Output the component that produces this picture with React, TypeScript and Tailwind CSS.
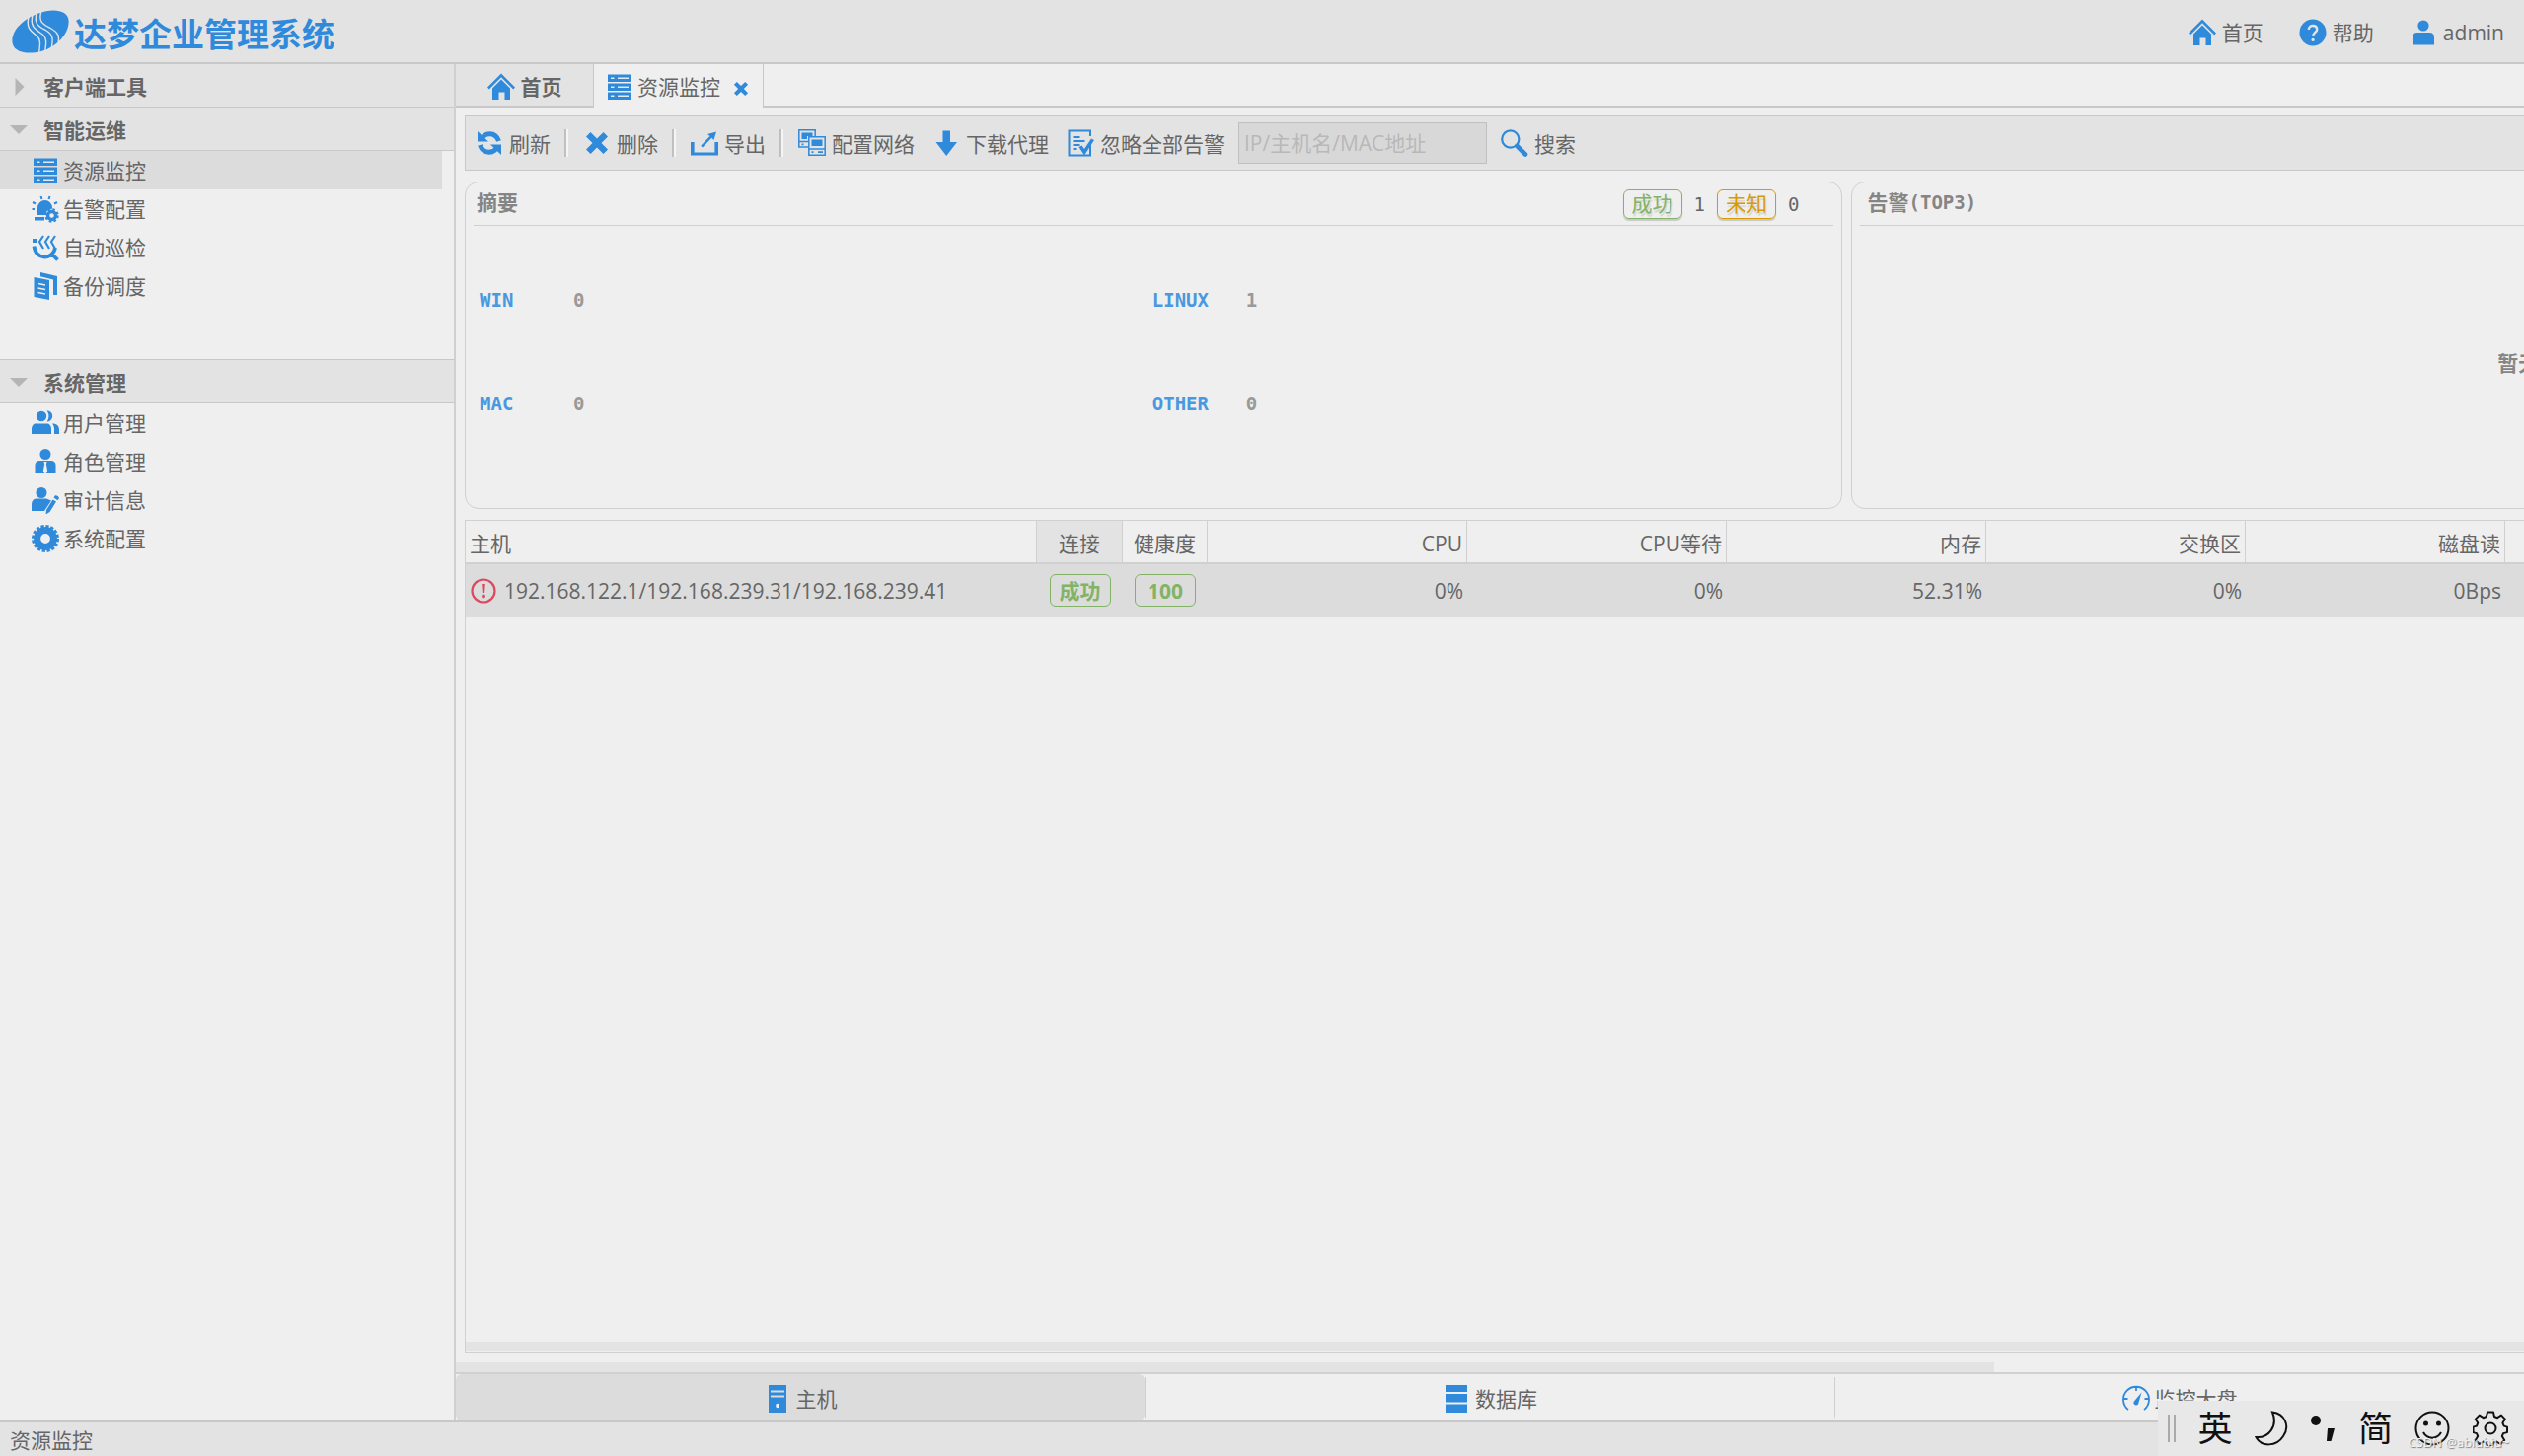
import type { ReactNode } from "react";

type IconProps = { size?: string };

const Svg = ({ size = "h-7 w-7", children }: IconProps & { children: ReactNode }) => (
  <svg
    viewBox="0 0 28 28"
    fill="currentColor"
    aria-hidden="true"
    className={`${size} shrink-0 text-[#308adb]`}
  >
    {children}
  </svg>
);

const HomeIcon = () => (
  <Svg>
    <path d="M14 .5 28 14.500 26.200 16.400 14 4.300 1.800 16.400 0 14.500Z" />
    <path d="M14 6.500 23 15.500V27H17.500V19.500H11.500V27H5V15.500Z" />
  </Svg>
);

const HelpIcon = () => (
  <Svg>
    <circle cx="14" cy="14" r="13.500" />
    <path
      d="M9.800 11c0-2.600 1.800-4 4.200-4s4.200 1.400 4.200 3.700c0 3.300-4 3.200-4 6.800"
      fill="none"
      stroke="#e3e3e3"
      strokeWidth="2.400"
    />
    <circle cx="14.100" cy="21.400" r="1.600" fill="#e3e3e3" />
  </Svg>
);

const UserIcon = () => (
  <Svg>
    <circle cx="14" cy="7" r="5.600" />
    <path d="M3 26.500V18.500c0-3 2-4.500 4.500-4.500h13c2.500 0 4.500 1.500 4.500 4.500v8Z" />
  </Svg>
);

const RackIcon = () => (
  <Svg>
    {[1.5, 10.5, 19.5].map((y) => (
      <g key={y}>
        <rect x="2" y={y} width="24" height="7.500" />
        <path d={`M5 ${y + 3.7}h3.500M12 ${y + 3.7}h11`} stroke="#dfe9f2" strokeWidth="1.600" />
      </g>
    ))}
  </Svg>
);

const AlarmIcon = () => (
  <Svg>
    <path d="M9.500 1 10.500 4M18.500 1l-1 3M1 7l3 1.500M26 7l-3 1.500M.5 14H3" stroke="currentColor" strokeWidth="2" />
    <path d="M6 20v-7.500a7.500 7.500 0 0 1 15 0v1l-5 2L13.500 20Z" />
    <path d="M3 22h10v3.500H3Z" />
    <circle cx="20.500" cy="20.500" r="4" fill="none" stroke="currentColor" strokeWidth="3.400" />
    <circle cx="20.500" cy="20.500" r="6.200" fill="none" stroke="currentColor" strokeWidth="2" strokeDasharray="2.600 2.270" />
  </Svg>
);

const PatrolIcon = () => (
  <Svg>
    <rect x="1" y="5" width="4" height="4" />
    <path
      d="M12 2 8 8l4 7M18 2l-4 6 4 7M24 2l-4 6 4 7"
      fill="none"
      stroke="currentColor"
      strokeWidth="2.200"
    />
    <path d="M2.500 12.500C4 27 21.500 27 24 14M20.500 20.500l6 6" fill="none" stroke="currentColor" strokeWidth="3.800" />
  </Svg>
);

const BackupIcon = () => (
  <Svg>
    <path d="M9 0 26 4V23H22V7.500L9 4.200Z" />
    <path d="M2.500 5 18 8V28L2.500 25Z" />
    <path d="M7 11.500 14 13M6.500 16l7.500 1.500M6.500 20.500 14 22" stroke="#efefef" strokeWidth="1.600" />
  </Svg>
);

const UsersIcon = () => (
  <Svg>
    <circle cx="10" cy="7" r="5.200" />
    <path d="M0 25v-5c0-3.500 2-5.500 4.500-5.500h11c2.500 0 4.500 2 4.500 5.500v5Z" />
    <path d="M15.500 1.200a5.700 5.700 0 0 1 0 11.400c2.600-3.400 2.600-7.800 0-11.400ZM21 14.500c5 0 7 2.500 7 6.500v4h-5v-5c0-2.300-.6-4-2-5.500Z" />
  </Svg>
);

const RoleIcon = () => (
  <Svg>
    <circle cx="14" cy="6.500" r="5.500" />
    <path d="M3.500 26V17.500c0-3 2-4.500 4.500-4.500h12c2.500 0 4.500 1.500 4.500 4.500V26Z" />
    <path d="M12.500 14h3l-.6 2.500 1.300 7-2.200 2-2.200-2 1.300-7Z" fill="#efefef" />
  </Svg>
);

const AuditIcon = () => (
  <Svg>
    <circle cx="10" cy="6.500" r="5.500" />
    <path d="M0 25v-7c0-3 2-5.500 5-5.500h10l5 2-7 10.500Z" />
    <path d="m15 24 6.500-10.500 3.500 2L18.500 26l-4 2.500ZM22.500 11.500l1.200-2c1.200-1 4.800 1 4.100 2.800l-1.300 2Z" />
  </Svg>
);

const GearIcon = () => (
  <Svg>
    <circle cx="14" cy="14" r="8.400" fill="none" stroke="currentColor" strokeWidth="7" />
    <circle cx="14" cy="14" r="12.500" fill="none" stroke="currentColor" strokeWidth="3" strokeDasharray="3.200 1.709" />
  </Svg>
);

const RefreshIcon = () => (
  <Svg>
    <path d="M5.500 11.500C8 3 20 2 23.500 12M22.500 16.500C20 25 8 26 4.500 16" fill="none" stroke="currentColor" strokeWidth="5" />
    <path d="M2 2v10.500H13ZM26 26V15.500H15Z" />
  </Svg>
);

const CrossIcon = ({ size }: IconProps) => (
  <Svg size={size}>
    <path d="M7.500 3 14 9.500 20.500 3 25 7.500 18.500 14 25 20.500 20.500 25 14 18.500 7.500 25 3 20.500 9.500 14 3 7.500Z" />
  </Svg>
);

const ExportIcon = () => (
  <Svg>
    <path d="M0 13h3.600v10.500h20.800V13H28v13.500H0Z" />
    <path d="M26 2.500 23.500 11 21.300 8.800 12 18.500 10.200 16.700 19.500 7 17 5Z" />
  </Svg>
);

const NetworkIcon = () => (
  <Svg>
    <g fill="none" stroke="currentColor" strokeWidth="1.500">
      <path d="M10 18H.8V.8h16.400V7M.8 12.500H10" />
      <path d="M10.800 7.800h16.400v18.400H10.800ZM10.800 20h16.400" />
    </g>
    <path d="M3.500 3.500h11V7H9v3H3.500ZM13.500 10.500h11v6.500h-11ZM3.500 14.500h2v1.800h-2ZM13.500 22.200h2V24h-2ZM20 22.200h5V24h-5Z" />
  </Svg>
);

const DownIcon = () => (
  <Svg>
    <path d="M10.500 1.500h7.500V13H25L14.200 27 3.500 13h7Z" />
  </Svg>
);

const IgnoreIcon = () => (
  <Svg>
    <path d="M24 14V26.500H2.500V1.500H24V7" fill="none" stroke="currentColor" strokeWidth="2" />
    <path d="M6.500 8h7M6.500 12h12M6.500 16h7M6.500 20h4" stroke="currentColor" strokeWidth="2" />
    <path d="m12.500 18 3-1.500 2.500 3.500L25 9.500l3 1.500-10 15.500Z" />
  </Svg>
);

const SearchIcon = () => (
  <Svg>
    <circle cx="9.800" cy="10" r="8.600" fill="none" stroke="currentColor" strokeWidth="2.200" />
    <path d="m16.500 17 8.500 8.500" stroke="currentColor" strokeWidth="4.600" strokeLinecap="round" />
  </Svg>
);

const HostIcon = () => (
  <Svg>
    <path d="M5 0h18v28H5Z" />
    <path d="M7 6.500h14M7 11.500h14" stroke="#dcdcdc" strokeWidth="2" />
    <ellipse cx="14" cy="21" rx="1.800" ry="2.300" fill="#efefef" />
  </Svg>
);

const DatabaseIcon = () => (
  <Svg>
    <path d="M3 0h22v7H3ZM3 9h22v8.500H3ZM3 19.500h22V28H3Z" />
  </Svg>
);

const GaugeIcon = () => (
  <Svg>
    <path
      d="M6 25A13 13 0 1 1 22 25M14 1v5M1 14h4.500M22.500 14H27"
      fill="none"
      stroke="currentColor"
      strokeWidth="1.800"
    />
    <path d="M19.500 7.500 16 19.500c-1.600 2-5.500.5-4.500-2.500Z" />
  </Svg>
);

const Logo = () => (
  <svg viewBox="0 0 58 44" className="h-11 w-[58px] shrink-0" aria-hidden="true">
    <path
      d="M27 3.500C41-2 57-.5 57.600 11 58 24 46 37 30 42 14 46 0 42.500.4 31 .8 19 13 8.500 27 3.500Z"
      fill="#308adb"
    />
    <g fill="none" stroke="#e3e3e3" strokeWidth="1.400">
      <path d="M17 7C14 19 20 22 25 26S28.500 36 27.500 45" />
      <path d="M21 5C18 17 24 20 30 24S35 34 33.500 43" />
      <path d="M25 3C22 15 28 17 35 21S42 30 40 40" />
      <path d="M30 1C26 13 33 15 40 19S49 27 46.500 36" />
    </g>
  </svg>
);

const opsItems = [
  { label: "资源监控", icon: <RackIcon />, active: true },
  { label: "告警配置", icon: <AlarmIcon /> },
  { label: "自动巡检", icon: <PatrolIcon /> },
  { label: "备份调度", icon: <BackupIcon /> },
];

const systemItems = [
  { label: "用户管理", icon: <UsersIcon /> },
  { label: "角色管理", icon: <RoleIcon /> },
  { label: "审计信息", icon: <AuditIcon /> },
  { label: "系统配置", icon: <GearIcon /> },
];

const summary = [
  { label: "WIN", value: 0 },
  { label: "LINUX", value: 1 },
  { label: "MAC", value: 0 },
  { label: "OTHER", value: 0 },
];

const metrics = [
  { label: "CPU", value: "0%" },
  { label: "CPU等待", value: "0%" },
  { label: "内存", value: "52.31%" },
  { label: "交换区", value: "0%" },
  { label: "磁盘读", value: "0Bps" },
];

export default function App() {
  return (
    <div className="flex h-screen flex-col overflow-hidden bg-[#efefef] font-['Open_Sans','Noto_Sans_CJK_SC',sans-serif] text-[21px] leading-7 text-[#666]">
      <Header />
      <div className="flex min-h-0 flex-1">
        <SideBar />
        <main className="flex min-w-0 flex-1 flex-col border-l-2 border-[#d0d0d0]">
          <PageTabs />
          <div className="min-h-0 flex-1 overflow-hidden">
            <div className="flex h-full min-w-[2818px] flex-col px-[9px] pt-2 pb-[9px]">
              <ToolBar />
              <div className="mt-[11px] flex h-[332px] gap-[9px]">
                <SummaryPanel />
                <AlarmPanel />
              </div>
              <HostTable />
            </div>
          </div>
          {/* Horizontal scroll bar */}
          <div className="h-[10px] shrink-0">
            <div className="h-full w-[74.4%] bg-[#e3e3e3]" />
          </div>
          <ViewTabs />
        </main>
      </div>
      <footer className="h-9 shrink-0 border-t-2 border-[#c8c8c8] bg-[#e3e3e3] px-[10px] pt-1">资源监控</footer>
      <InputMethodBar />
    </div>
  );
}

const Header = () => (
  <header className="flex h-[65px] shrink-0 items-center justify-between border-b-2 border-[#c8c8c8] bg-[#e3e3e3] pr-5 pl-3">
    <div className="flex items-center gap-[5px]">
      <Logo />
      <h1 className="pt-[6px] text-[33px] leading-10 font-bold text-[#308adb]">达梦企业管理系统</h1>
    </div>
    <nav className="flex gap-9 pt-[2px]">
      <a href="#" className="flex items-center gap-[6px]">
        <HomeIcon />
        首页
      </a>
      <a href="#" className="flex items-center gap-[6px]">
        <HelpIcon />
        帮助
      </a>
      <a href="#" className="flex items-center gap-[6px]">
        <UserIcon />
        admin
      </a>
    </nav>
  </header>
);

const SectionTitle = ({ label, open = false }: { label: string; open?: boolean }) => (
  <button
    type="button"
    aria-expanded={open}
    className="flex h-11 w-full items-center gap-4 border-b border-[#c8c8c8] bg-[#e3e3e3] pt-[3px] pl-[10px] font-bold"
  >
    <svg viewBox="0 0 18 18" className="h-[18px] w-[18px] fill-[#b5b5b5]" aria-hidden="true">
      {open ? <path d="M0 4h18L9 13Z" /> : <path d="M5.500 0v18l9-9Z" />}
    </svg>
    {label}
  </button>
);

const SideList = ({ items }: { items: { label: string; icon: ReactNode; active?: boolean }[] }) => (
  <ul className="mr-3">
    {items.map((item) => (
      <li key={item.label}>
        <a
          href="#"
          className={`flex h-[39px] items-center gap-1 pl-8 ${item.active ? "bg-[#dcdcdc]" : ""}`}
        >
          {item.icon}
          {item.label}
        </a>
      </li>
    ))}
  </ul>
);

const SideBar = () => (
  <aside className="w-[460px] shrink-0">
    <SectionTitle label="客户端工具" />
    <SectionTitle label="智能运维" open />
    <SideList items={opsItems} />
    <div className="mt-[55px] border-t border-[#c8c8c8]">
      <SectionTitle label="系统管理" open />
      <SideList items={systemItems} />
    </div>
  </aside>
);

const PageTabs = () => (
  <div className="flex h-11 shrink-0">
    <button
      type="button"
      className="flex w-[140px] items-center justify-center gap-[6px] border-r border-b-2 border-[#c8c8c8] bg-[#e3e3e3] pt-1 font-bold"
    >
      <HomeIcon />
      首页
    </button>
    <div className="flex items-center border-r border-[#c8c8c8] pt-[2px] pr-[13px] pl-3">
      <button type="button" className="flex items-center gap-1">
        <RackIcon />
        资源监控
      </button>
      <button type="button" aria-label="关闭" className="ml-3 pt-1">
        <CrossIcon size="h-[18px] w-[18px]" />
      </button>
    </div>
    <div className="flex-1 border-b-2 border-[#c8c8c8]" />
  </div>
);

const ToolButton = ({ label, icon }: { label: string; icon: ReactNode }) => (
  <button type="button" className="flex items-center gap-[6px] whitespace-nowrap">
    {icon}
    <span className="pt-[2px]">{label}</span>
  </button>
);

const Divider = () => (
  <span className="mr-[15px] ml-[14px] h-7 w-1 border-r-2 border-l-2 border-r-[#f5f5f5] border-l-[#c0c0c0]" />
);

const ToolBar = () => (
  <div className="flex h-14 shrink-0 items-center border border-[#c8c8c8] bg-[#e3e3e3] pl-[10px]">
    <ToolButton label="刷新" icon={<RefreshIcon />} />
    <Divider />
    <ToolButton label="删除" icon={<CrossIcon />} />
    <Divider />
    <ToolButton label="导出" icon={<ExportIcon />} />
    <Divider />
    <div className="flex items-center gap-[18px]">
      <ToolButton label="配置网络" icon={<NetworkIcon />} />
      <ToolButton label="下载代理" icon={<DownIcon />} />
      <ToolButton label="忽略全部告警" icon={<IgnoreIcon />} />
    </div>
    <input
      type="text"
      aria-label="搜索主机"
      placeholder="IP/主机名/MAC地址"
      className="mr-[14px] ml-[14px] h-[42px] w-[252px] border border-[#c0c0c0] bg-[#d8d8d8] px-[5px] placeholder:text-[#b8b8b8]"
    />
    <ToolButton label="搜索" icon={<SearchIcon />} />
  </div>
);

const SummaryPanel = () => (
  <section className="flex-1 rounded-[14px] border border-[#d0d0d0] px-2">
    <div className="flex h-11 items-center justify-between border-b border-[#d0d0d0] pr-[34px] pl-[3px]">
      <h2 className="pb-1 font-bold text-[#858585]">摘要</h2>
      <div className="flex items-center gap-3 font-['DejaVu_Sans_Mono','Noto_Sans_CJK_SC',monospace] text-[19px]">
        <span className="rounded-md border border-[#82b366] px-2 text-[21px] text-[#82b366] shadow-[0_2px_1px_#c8c8c8] [text-shadow:1px_3px_1px_#d4d4d4]">
          成功
        </span>
        <span>1</span>
        <span className="rounded-md border border-[#d79b00] px-2 text-[21px] text-[#d79b00] shadow-[0_2px_1px_#c8c8c8] [text-shadow:1px_3px_1px_#d4d4d4]">
          未知
        </span>
        <span>0</span>
      </div>
    </div>
    <dl className="grid grid-cols-2 pt-[22px] pr-2 pl-[6px] font-['DejaVu_Sans_Mono',monospace] text-[19px] font-bold">
      {summary.map((item) => (
        <div key={item.label} className="flex h-[105px] items-center">
          <dt className="w-[95px] text-[#4a98df]">{item.label}</dt>
          <dd className="text-[#999]">{item.value}</dd>
        </div>
      ))}
    </dl>
  </section>
);

const AlarmPanel = () => (
  <section className="flex flex-1 flex-col rounded-[14px] border border-[#d0d0d0] px-2">
    <h2 className="flex h-11 items-center border-b border-[#d0d0d0] pb-1 pl-2 font-bold text-[#858585]">
      告警<span className="font-['DejaVu_Sans_Mono',monospace] text-[19px]">(TOP3)</span>
    </h2>
    <p className="flex flex-1 items-center justify-center pb-2 font-bold text-[#858585]">暂无数据</p>
  </section>
);

const HostTable = () => (
  <div className="mt-[11px] flex min-h-0 flex-1 flex-col border border-[#d0d0d0]">
    <div className="flex-1">
      <table className="w-full table-fixed border-separate border-spacing-0">
        <colgroup>
          <col className="w-[579px]" />
          <col className="w-[87px]" />
          <col className="w-[86px]" />
          {metrics.map((metric) => (
            <col key={metric.label} className="w-[263px]" />
          ))}
          <col />
        </colgroup>
        <thead>
          <tr className="h-11 *:border-r *:border-b-2 *:border-[#d0d0d0] *:pt-1 *:font-normal">
            <th className="pl-1 text-left">主机</th>
            <th className="bg-[#e3e3e3]">连接</th>
            <th>健康度</th>
            {metrics.map((metric) => (
              <th key={metric.label} className="pr-1 text-right">
                {metric.label}
              </th>
            ))}
            <th />
          </tr>
        </thead>
        <tbody>
          <tr className="h-[53px] bg-[#dcdcdc]">
            <td>
              <div className="flex items-center gap-2 pl-[5px]">
                <svg viewBox="0 0 26 26" className="h-[26px] w-[26px]" aria-hidden="true">
                  <circle cx="13" cy="13" r="11.500" fill="none" stroke="#dc4a60" strokeWidth="2.200" />
                  <path d="M11.200 6h3.600l-.7 9h-2.200Z" fill="#dc4a60" />
                  <circle cx="13" cy="18.500" r="1.900" fill="#dc4a60" />
                </svg>
                192.168.122.1/192.168.239.31/192.168.239.41
              </div>
            </td>
            <td className="text-center">
              <HealthBadge>成功</HealthBadge>
            </td>
            <td className="text-center">
              <HealthBadge>100</HealthBadge>
            </td>
            {metrics.map((metric) => (
              <td key={metric.label} className="pr-1 text-right">
                {metric.value}
              </td>
            ))}
            <td />
          </tr>
        </tbody>
      </table>
    </div>
    <div className="mb-px h-[10px] bg-[#e3e3e3]" />
  </div>
);

const HealthBadge = ({ children }: { children: ReactNode }) => (
  <span className="inline-flex h-[33px] w-[62px] items-center justify-center rounded-md border border-[#82b366] align-middle font-bold text-[#82b366]">
    {children}
  </span>
);

const ViewTabs = () => (
  <div className="flex h-[49px] shrink-0 border-t-2 border-[#d0d0d0]">
    <button type="button" className="flex flex-1 items-center justify-center gap-[5px] rounded-md bg-[#dcdcdc] pt-[2px]">
      <HostIcon />
      主机
    </button>
    <span className="my-[3px] w-px bg-[#d0d0d0]" />
    <button type="button" className="flex flex-1 items-center justify-center gap-[5px] pt-[2px]">
      <DatabaseIcon />
      数据库
    </button>
    <span className="my-[3px] w-px bg-[#d0d0d0]" />
    <button type="button" className="flex flex-1 items-center justify-center gap-[5px] pt-[2px]">
      <GaugeIcon />
      监控大盘
    </button>
  </div>
);

// Floats over the lower right corner of the page
const InputMethodBar = () => (
  <div className="absolute right-0 bottom-0 flex h-14 w-[371px] items-center justify-between bg-[#e8e8e8] pr-4 pl-[10px] text-[35px] leading-10 text-[#111]">
    <span className="h-7 w-2 border-x-2 border-[#aaa]" />
    <span>英</span>
    <svg viewBox="0 0 34 36" className="h-9 w-[34px]" fill="none" stroke="currentColor" strokeWidth="2" aria-hidden="true">
      <path d="M18 1.500C31 3 36 16 29 26 22 37 7 37 1.500 27 14 28 24 16 18 1.500Z" />
    </svg>
    <svg viewBox="0 0 26 28" className="h-7 w-[26px]" fill="currentColor" aria-hidden="true">
      <circle cx="6" cy="6" r="5" />
      <path d="M18 14h7l-3.500 13H17Z" />
    </svg>
    <span>简</span>
    <svg viewBox="0 0 36 36" className="h-9 w-9" fill="none" stroke="currentColor" strokeWidth="2" aria-hidden="true">
      <circle cx="18" cy="18" r="16.500" />
      <path d="M9 22c4 7.500 14 7.500 18 0" />
      <circle cx="11.500" cy="13" r="1.500" fill="currentColor" />
      <circle cx="24.500" cy="13" r="1.500" fill="currentColor" />
    </svg>
    <svg
      viewBox="0 0 36 36"
      className="h-9 w-9"
      fill="none"
      stroke="currentColor"
      strokeWidth="2"
      strokeLinejoin="round"
      aria-hidden="true"
    >
      <path d="M15 1.500h6l1 4.500 3 1.200 4-2.600 3.800 4-2.400 4 1.300 3 3.300 1v5.500l-4 1-1.200 3 2.400 4-4 3.900-4-2.500-3 1.200-1.200 3.300h-5l-1.200-3.300-3-1.200-4 2.500-4-3.900 2.400-4-1.200-3-3.500-1v-5.500l3.500-1 1.200-3-2.400-4 4-4 4 2.600 3-1.200Z" />
      <circle cx="18" cy="18" r="5.500" />
    </svg>
    <span className="absolute right-[15px] bottom-1 text-[13px] leading-5 text-[#f4f4f4] [text-shadow:1px_1px_1px_#777]">
      CSDN @abiubiu~
    </span>
  </div>
);
